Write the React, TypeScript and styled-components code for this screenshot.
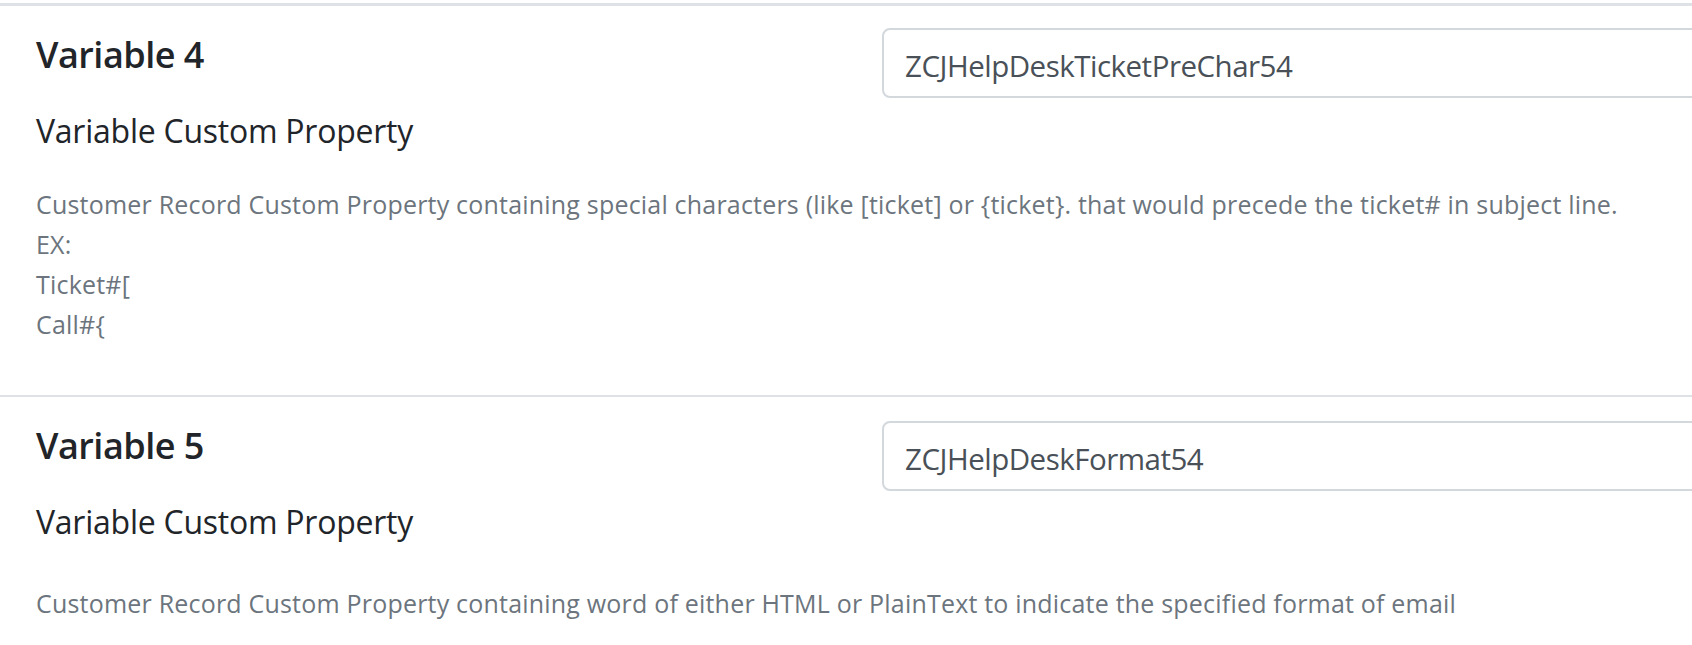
import React from 'react'
import styled, { createGlobalStyle } from 'styled-components'

const GlobalStyle = createGlobalStyle`
  body {
    margin: 0;
    background: #fff;
    font-family: "Open Sans", "Noto Sans", sans-serif;
    overflow: hidden;
  }
`

const Page = styled.div`
  width: 1760px;
  padding-top: 3px;
`

const Section = styled.section<{ $line: number }>`
  border-top: ${p => p.$line}px solid #dee2e6;
  padding-left: 36px;
`

const Header = styled.div`
  display: grid;
  grid-template-columns: 846px 1fr;
  align-items: start;
`

const Titles = styled.div`
  display: flex;
  flex-direction: column;
`

const Title = styled.h4`
  margin: 27px 0 0;
  font-size: 36px;
  font-weight: 600;
  line-height: 44px;
  letter-spacing: -0.5px;
  color: #212529;
`

const Subtitle = styled.h5`
  margin: 34px 0 0;
  font-size: 32px;
  font-weight: 400;
  line-height: 40px;
  letter-spacing: -0.25px;
  color: #212529;
`

const Field = styled.input<{ $top: number }>`
  margin-top: ${p => p.$top}px;
  height: 70px;
  box-sizing: border-box;
  border: 2px solid #d3d8dd;
  border-radius: 8px;
  padding: 4px 21px 0;
  font-family: inherit;
  font-size: 29.5px;
  letter-spacing: -0.5px;
  color: #495057;
  background: #fff;
  outline: none;
`

const Description = styled.p<{ $gap: number }>`
  margin: ${p => p.$gap}px 0 0;
  font-size: 25px;
  line-height: 40px;
  letter-spacing: 0.2px;
  color: #6c757d;
`

const Spacer = styled.div<{ $h: number }>`
  height: ${p => p.$h}px;
`

type Variable = {
  name: string
  value: string
  lines: string[]
  fieldTop: number
  gap: number
  line: number
  bottom: number
}

const variables: Variable[] = [
  {
    name: 'Variable 4',
    value: 'ZCJHelpDeskTicketPreChar54',
    lines: [
      'Customer Record Custom Property containing special characters (like [ticket] or {ticket}. that would precede the ticket# in subject line.',
      'EX:',
      'Ticket#[',
      'Call#{',
    ],
    fieldTop: 22,
    gap: 33,
    line: 3,
    bottom: 51,
  },
  {
    name: 'Variable 5',
    value: 'ZCJHelpDeskFormat54',
    lines: [
      'Customer Record Custom Property containing word of either HTML or PlainText to indicate the specified format of email',
    ],
    fieldTop: 24,
    gap: 41,
    line: 2,
    bottom: 40,
  },
]

export default function App() {
  return (
    <>
      <GlobalStyle />
      <Page>
        {variables.map(v => (
          <Section key={v.name} $line={v.line}>
            <Header>
              <Titles>
                <Title>{v.name}</Title>
                <Subtitle>Variable Custom Property</Subtitle>
              </Titles>
              <Field $top={v.fieldTop} defaultValue={v.value} />
            </Header>
            <Description $gap={v.gap}>
              {v.lines.map((l, i) => (
                <React.Fragment key={i}>
                  {i > 0 && <br />}
                  {l}
                </React.Fragment>
              ))}
            </Description>
            <Spacer $h={v.bottom} />
          </Section>
        ))}
      </Page>
    </>
  )
}
